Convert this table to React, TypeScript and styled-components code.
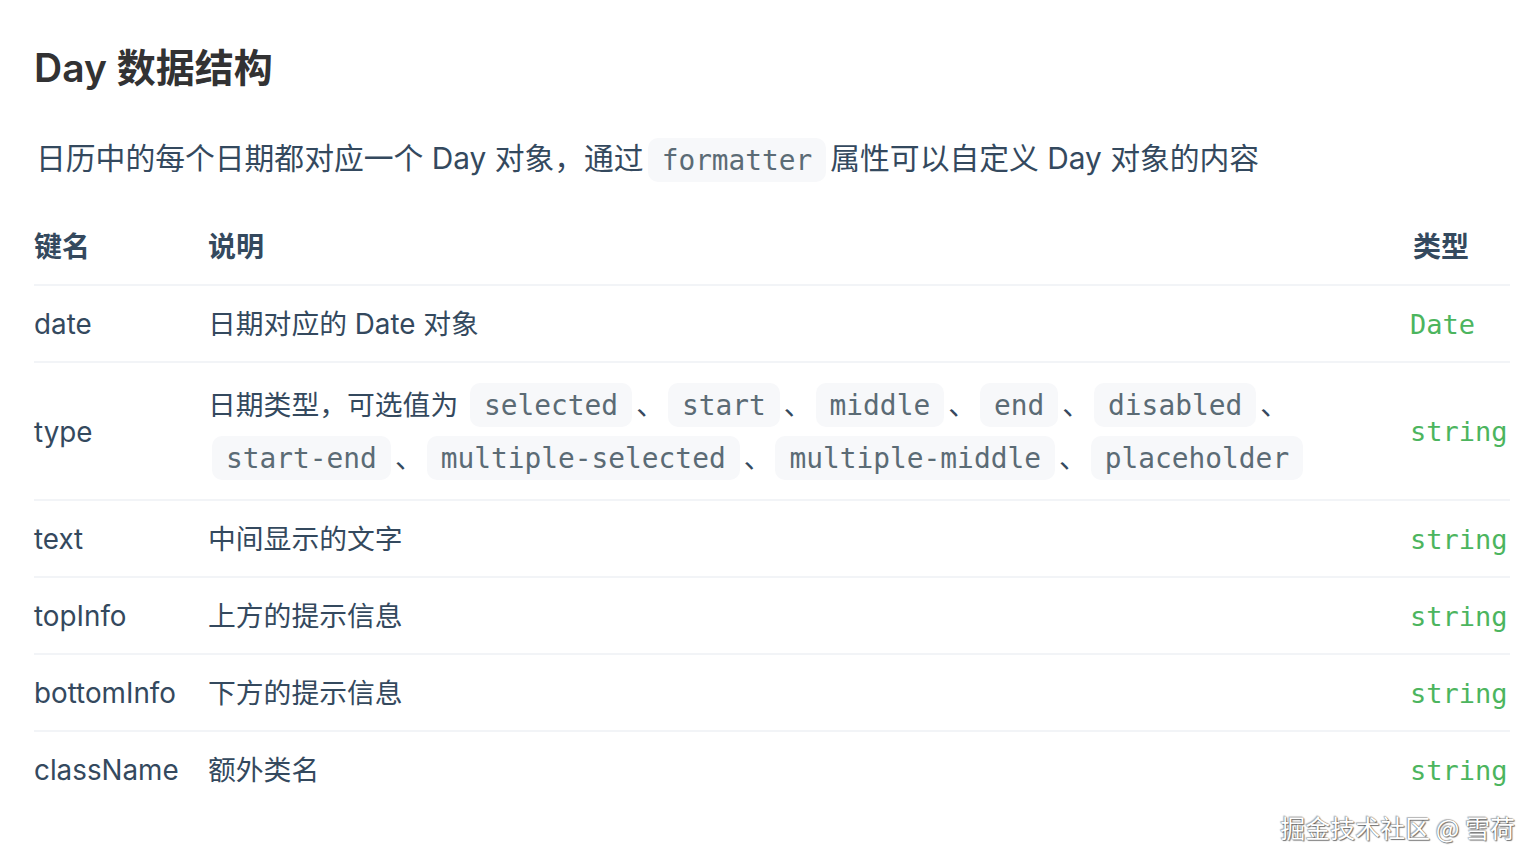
import React from "react";
import styled, { createGlobalStyle } from "styled-components";

const Global = createGlobalStyle`
  html, body { margin: 0; padding: 0; background: #fff; }
  body { font-family: Inter, "Noto Sans CJK SC", sans-serif; -webkit-font-smoothing: antialiased; }
`;

const Page = styled.div`
  position: relative;
  width: 1538px;
  height: 866px;
  box-sizing: border-box;
  padding: 42px 28px 0 34px;
  overflow: hidden;
`;

const Title = styled.h3`
  margin: 0;
  font-size: 39px;
  line-height: 52px;
  font-weight: 600;
  color: #323233;
`;

const Para = styled.p`
  margin: 38px 0 0 2px;
  font-size: 29.8px;
  line-height: 52px;
  color: #34495e;
`;

const Code = styled.code<{ $size?: number }>`
  font-family: "DejaVu Sans Mono", monospace;
  font-size: ${(p) => p.$size ?? 27.85}px;
  color: #5b6b75;
  background: #f7f8fa;
  border-radius: 10px;
  padding: 5.5px 14px;
  margin: 0 4px;
`;

const Table = styled.table`
  margin-top: 23px;
  width: 1476px;
  border-collapse: collapse;
  table-layout: fixed;
  color: #34495e;
  font-size: 27.8px;
  line-height: 52px;
`;

const HeadRow = styled.tr`
  border-bottom: 2px solid #f2f4f7;
`;

const Row = styled.tr`
  border-bottom: 2px solid #f2f4f7;
  &:last-child { border-bottom: none; }
`;

const Head = styled.th`
  text-align: left;
  font-weight: 600;
  font-size: 28px;
  padding: 12px 17px 11px;
  vertical-align: middle;
  &:first-child { padding-left: 0; }
  &:last-child { padding-right: 0; padding-left: 20px; }
`;

const Cell = styled.td<{ $tall?: boolean }>`
  padding: ${(p) => (p.$tall ? "15.5px 17px 14.5px" : "11.5px 17px 10.5px")};
  vertical-align: middle;
  &:first-child { padding-left: 0; }
  &:last-child { padding-right: 0; }
`;

const Type = styled.em`
  font-style: normal;
  font-family: "DejaVu Sans Mono", monospace;
  font-size: 27px;
  color: #4cb55e;
`;

const Watermark = styled.div`
  position: absolute;
  right: 23px;
  bottom: 24px;
  font-family: "Noto Sans CJK SC", sans-serif;
  font-size: 25px;
  line-height: 30px;
  color: #fff;
  text-shadow: 0 0 1px #555, 1px 1px 1px rgba(0, 0, 0, 0.55), -1px -1px 1px rgba(0, 0, 0, 0.25);
`;

const typeValues = [
  "selected",
  "start",
  "middle",
  "end",
  "disabled",
  "start-end",
  "multiple-selected",
  "multiple-middle",
  "placeholder",
];

const rows: { key: string; desc: React.ReactNode; type: string; tall?: boolean }[] = [
  { key: "date", desc: "日期对应的 Date 对象", type: "Date" },
  {
    key: "type",
    tall: true,
    desc: (
      <>
        日期类型，可选值为{" "}
        {typeValues.map((v, i) => (
          <React.Fragment key={v}>
            <Code>{v}</Code>
            {i < typeValues.length - 1 ? "、" : ""}
          </React.Fragment>
        ))}
      </>
    ),
    type: "string",
  },
  { key: "text", desc: "中间显示的文字", type: "string" },
  { key: "topInfo", desc: "上方的提示信息", type: "string" },
  { key: "bottomInfo", desc: "下方的提示信息", type: "string" },
  { key: "className", desc: "额外类名", type: "string" },
];

export default function App() {
  return (
    <Page>
      <Global />
      <Title>Day 数据结构</Title>
      <Para>
        日历中的每个日期都对应一个 Day 对象，通过<Code $size={27.8}>formatter</Code>属性可以自定义 Day 对象的内容
      </Para>
      <Table>
        <colgroup>
          <col style={{ width: 157 }} />
          <col />
          <col style={{ width: 117 }} />
        </colgroup>
        <thead>
          <HeadRow>
            <Head>键名</Head>
            <Head>说明</Head>
            <Head>类型</Head>
          </HeadRow>
        </thead>
        <tbody>
          {rows.map((r) => (
            <Row key={r.key}>
              <Cell>{r.key}</Cell>
              <Cell $tall={r.tall}>{r.desc}</Cell>
              <Cell>
                <Type>{r.type}</Type>
              </Cell>
            </Row>
          ))}
        </tbody>
      </Table>
      <Watermark>掘金技术社区 @ 雪荷</Watermark>
    </Page>
  );
}
